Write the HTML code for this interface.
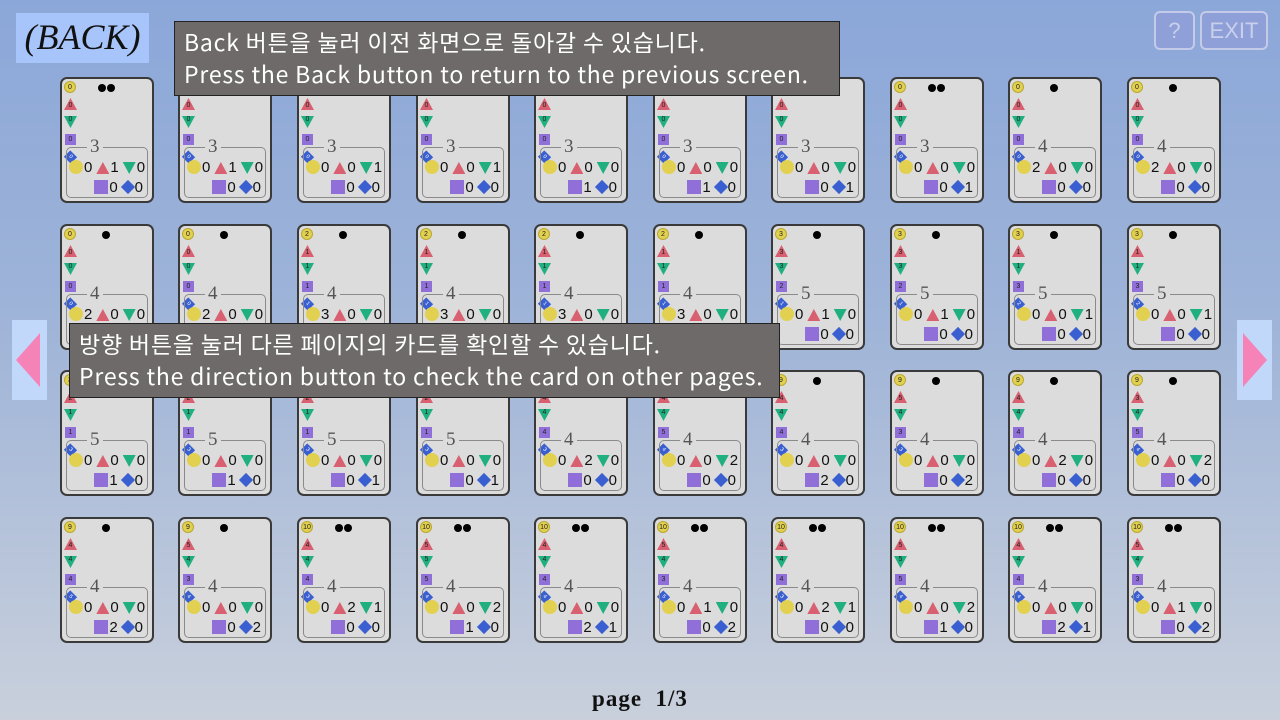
<!DOCTYPE html><html><head><meta charset="utf-8"><style>
*{margin:0;padding:0;box-sizing:border-box}
body{width:1280px;height:720px;overflow:hidden;position:relative;background:linear-gradient(#8ba7d9 0%,#9fb4d8 45%,#c9d0dc 100%);font-family:"Liberation Sans","Noto Sans CJK KR",sans-serif}
.c{position:absolute;width:94px;height:126px;background:#dcdcdc;border:2px solid #3a3a3a;border-radius:7px}
.c>i{position:absolute;left:2px;font-style:normal;font-size:7px;color:#222;text-align:center;line-height:12px;width:13px;height:12px}
.y{top:2px;background:#e2d050;border-radius:50%;border:1px solid #b8a830;width:12px!important}
.t{top:19px;background:#d86070;clip-path:polygon(50% 0,100% 100%,0 100%);line-height:15px!important}
.v{top:37px;background:#20b080;clip-path:polygon(0 0,100% 0,50% 100%);line-height:8px!important}
.s{top:55px;background:#9070d8;width:11px!important;height:11px!important;left:3px!important;line-height:11px!important}
.q{top:72px;background:#3a5fd0;transform:rotate(45deg) scale(.75);color:#fff!important}
.d1,.d2{position:absolute;top:5px;left:40px;width:8px;height:8px;border-radius:50%;background:#000}
.d2{left:36px;box-shadow:9px 0 0 #000}
.bx{position:absolute;left:4px;top:68px;width:82px;height:51px;border:1.5px solid #8a8a8a;border-radius:5px}
.n{position:absolute;left:20px;top:-11px;background:#dcdcdc;padding:0 3px;font:19px "Liberation Serif",serif;color:#555;line-height:19px}
.bx p{position:absolute;font-size:15px;color:#111;line-height:16px;white-space:nowrap}
.p1{left:2px;top:12px}.p2{right:4px;top:32px}
u{display:inline-block;vertical-align:-2px;margin:0 1px 0 4px;text-decoration:none}
.p1 u:first-child{margin-left:0}
.ci{width:14px;height:14px;border-radius:50%;background:#e2d050}
.tr{width:13px;height:12px;background:#d86070;clip-path:polygon(50% 0,100% 100%,0 100%)}
.iv{width:13px;height:12px;background:#20b080;clip-path:polygon(0 0,100% 0,50% 100%)}
.sq{width:14px;height:14px;background:#9070d8}
.dm{width:10px;height:10px;background:#3a5fd0;transform:rotate(45deg);margin:0 2px 0 5px;vertical-align:0}
.tip{position:absolute;background:#6e6a6a;border:1.5px solid #222;color:#fff;font-family:"Noto Sans CJK KR","Liberation Sans",sans-serif;font-size:23px;letter-spacing:0.8px;line-height:32px;padding:3px 9px;white-space:nowrap;overflow:hidden}
.arr{position:absolute;top:320px;width:35px;height:80px;background:#c2d8fb}
.arr:after{content:"";position:absolute;top:13px;width:24px;height:54px;background:#f583b7}
.al:after{left:4px;clip-path:polygon(100% 0,100% 100%,0 50%)}
.ar:after{left:6px;clip-path:polygon(0 0,0 100%,100% 50%)}
.tb{position:absolute;top:11px;height:39px;border:2px solid #c4cbe8;border-radius:6px;background:#8f9fd8;color:#c8d0ec;font-size:22px;text-align:center;line-height:35px}
</style></head><body>
<div style="position:absolute;left:16px;top:13px;width:133px;height:50px;background:#a8c5fb;font:italic 36px 'Liberation Serif',serif;text-align:center;line-height:48px;color:#111">(BACK)</div>
<div class="tb" style="left:1154px;width:41px">?</div>
<div class="tb" style="left:1200px;width:68px">EXIT</div>

<div class="c" style="left:60px;top:77px"><i class="y">0</i><b class="d2"></b><i class="t">0</i><i class="v">0</i><i class="s">0</i><i class="q">0</i><div class="bx"><span class="n">3</span><p class="p1"><u class="ci"></u>0<u class="tr"></u>1<u class="iv"></u>0</p><p class="p2"><u class="sq"></u>0<u class="dm"></u>0</p></div></div>
<div class="c" style="left:178px;top:77px"><i class="y">0</i><b class="d2"></b><i class="t">0</i><i class="v">0</i><i class="s">0</i><i class="q">0</i><div class="bx"><span class="n">3</span><p class="p1"><u class="ci"></u>0<u class="tr"></u>1<u class="iv"></u>0</p><p class="p2"><u class="sq"></u>0<u class="dm"></u>0</p></div></div>
<div class="c" style="left:297px;top:77px"><i class="y">0</i><b class="d2"></b><i class="t">0</i><i class="v">0</i><i class="s">0</i><i class="q">0</i><div class="bx"><span class="n">3</span><p class="p1"><u class="ci"></u>0<u class="tr"></u>0<u class="iv"></u>1</p><p class="p2"><u class="sq"></u>0<u class="dm"></u>0</p></div></div>
<div class="c" style="left:416px;top:77px"><i class="y">0</i><b class="d2"></b><i class="t">0</i><i class="v">0</i><i class="s">0</i><i class="q">0</i><div class="bx"><span class="n">3</span><p class="p1"><u class="ci"></u>0<u class="tr"></u>0<u class="iv"></u>1</p><p class="p2"><u class="sq"></u>0<u class="dm"></u>0</p></div></div>
<div class="c" style="left:534px;top:77px"><i class="y">0</i><b class="d2"></b><i class="t">0</i><i class="v">0</i><i class="s">0</i><i class="q">0</i><div class="bx"><span class="n">3</span><p class="p1"><u class="ci"></u>0<u class="tr"></u>0<u class="iv"></u>0</p><p class="p2"><u class="sq"></u>1<u class="dm"></u>0</p></div></div>
<div class="c" style="left:653px;top:77px"><i class="y">0</i><b class="d2"></b><i class="t">0</i><i class="v">0</i><i class="s">0</i><i class="q">0</i><div class="bx"><span class="n">3</span><p class="p1"><u class="ci"></u>0<u class="tr"></u>0<u class="iv"></u>0</p><p class="p2"><u class="sq"></u>1<u class="dm"></u>0</p></div></div>
<div class="c" style="left:771px;top:77px"><i class="y">0</i><b class="d2"></b><i class="t">0</i><i class="v">0</i><i class="s">0</i><i class="q">0</i><div class="bx"><span class="n">3</span><p class="p1"><u class="ci"></u>0<u class="tr"></u>0<u class="iv"></u>0</p><p class="p2"><u class="sq"></u>0<u class="dm"></u>1</p></div></div>
<div class="c" style="left:890px;top:77px"><i class="y">0</i><b class="d2"></b><i class="t">0</i><i class="v">0</i><i class="s">0</i><i class="q">0</i><div class="bx"><span class="n">3</span><p class="p1"><u class="ci"></u>0<u class="tr"></u>0<u class="iv"></u>0</p><p class="p2"><u class="sq"></u>0<u class="dm"></u>1</p></div></div>
<div class="c" style="left:1008px;top:77px"><i class="y">0</i><b class="d1"></b><i class="t">0</i><i class="v">0</i><i class="s">0</i><i class="q">0</i><div class="bx"><span class="n">4</span><p class="p1"><u class="ci"></u>2<u class="tr"></u>0<u class="iv"></u>0</p><p class="p2"><u class="sq"></u>0<u class="dm"></u>0</p></div></div>
<div class="c" style="left:1127px;top:77px"><i class="y">0</i><b class="d1"></b><i class="t">0</i><i class="v">0</i><i class="s">0</i><i class="q">0</i><div class="bx"><span class="n">4</span><p class="p1"><u class="ci"></u>2<u class="tr"></u>0<u class="iv"></u>0</p><p class="p2"><u class="sq"></u>0<u class="dm"></u>0</p></div></div>

<div class="c" style="left:60px;top:224px"><i class="y">0</i><b class="d1"></b><i class="t">0</i><i class="v">0</i><i class="s">0</i><i class="q">0</i><div class="bx"><span class="n">4</span><p class="p1"><u class="ci"></u>2<u class="tr"></u>0<u class="iv"></u>0</p><p class="p2"><u class="sq"></u>0<u class="dm"></u>0</p></div></div>
<div class="c" style="left:178px;top:224px"><i class="y">0</i><b class="d1"></b><i class="t">0</i><i class="v">0</i><i class="s">0</i><i class="q">0</i><div class="bx"><span class="n">4</span><p class="p1"><u class="ci"></u>2<u class="tr"></u>0<u class="iv"></u>0</p><p class="p2"><u class="sq"></u>0<u class="dm"></u>0</p></div></div>
<div class="c" style="left:297px;top:224px"><i class="y">2</i><b class="d1"></b><i class="t">1</i><i class="v">1</i><i class="s">1</i><i class="q">1</i><div class="bx"><span class="n">4</span><p class="p1"><u class="ci"></u>3<u class="tr"></u>0<u class="iv"></u>0</p><p class="p2"><u class="sq"></u>0<u class="dm"></u>0</p></div></div>
<div class="c" style="left:416px;top:224px"><i class="y">2</i><b class="d1"></b><i class="t">1</i><i class="v">1</i><i class="s">1</i><i class="q">1</i><div class="bx"><span class="n">4</span><p class="p1"><u class="ci"></u>3<u class="tr"></u>0<u class="iv"></u>0</p><p class="p2"><u class="sq"></u>0<u class="dm"></u>0</p></div></div>
<div class="c" style="left:534px;top:224px"><i class="y">2</i><b class="d1"></b><i class="t">1</i><i class="v">1</i><i class="s">1</i><i class="q">1</i><div class="bx"><span class="n">4</span><p class="p1"><u class="ci"></u>3<u class="tr"></u>0<u class="iv"></u>0</p><p class="p2"><u class="sq"></u>0<u class="dm"></u>0</p></div></div>
<div class="c" style="left:653px;top:224px"><i class="y">2</i><b class="d1"></b><i class="t">1</i><i class="v">1</i><i class="s">1</i><i class="q">1</i><div class="bx"><span class="n">4</span><p class="p1"><u class="ci"></u>3<u class="tr"></u>0<u class="iv"></u>0</p><p class="p2"><u class="sq"></u>0<u class="dm"></u>0</p></div></div>
<div class="c" style="left:771px;top:224px"><i class="y">3</i><b class="d1"></b><i class="t">3</i><i class="v">3</i><i class="s">2</i><i class="q">1</i><div class="bx"><span class="n">5</span><p class="p1"><u class="ci"></u>0<u class="tr"></u>1<u class="iv"></u>0</p><p class="p2"><u class="sq"></u>0<u class="dm"></u>0</p></div></div>
<div class="c" style="left:890px;top:224px"><i class="y">3</i><b class="d1"></b><i class="t">3</i><i class="v">3</i><i class="s">2</i><i class="q">1</i><div class="bx"><span class="n">5</span><p class="p1"><u class="ci"></u>0<u class="tr"></u>1<u class="iv"></u>0</p><p class="p2"><u class="sq"></u>0<u class="dm"></u>0</p></div></div>
<div class="c" style="left:1008px;top:224px"><i class="y">3</i><b class="d1"></b><i class="t">1</i><i class="v">1</i><i class="s">3</i><i class="q">2</i><div class="bx"><span class="n">5</span><p class="p1"><u class="ci"></u>0<u class="tr"></u>0<u class="iv"></u>1</p><p class="p2"><u class="sq"></u>0<u class="dm"></u>0</p></div></div>
<div class="c" style="left:1127px;top:224px"><i class="y">3</i><b class="d1"></b><i class="t">1</i><i class="v">1</i><i class="s">3</i><i class="q">2</i><div class="bx"><span class="n">5</span><p class="p1"><u class="ci"></u>0<u class="tr"></u>0<u class="iv"></u>1</p><p class="p2"><u class="sq"></u>0<u class="dm"></u>0</p></div></div>

<div class="c" style="left:60px;top:370px"><i class="y">3</i><b class="d1"></b><i class="t">2</i><i class="v">1</i><i class="s">1</i><i class="q">3</i><div class="bx"><span class="n">5</span><p class="p1"><u class="ci"></u>0<u class="tr"></u>0<u class="iv"></u>0</p><p class="p2"><u class="sq"></u>1<u class="dm"></u>0</p></div></div>
<div class="c" style="left:178px;top:370px"><i class="y">3</i><b class="d1"></b><i class="t">2</i><i class="v">1</i><i class="s">1</i><i class="q">3</i><div class="bx"><span class="n">5</span><p class="p1"><u class="ci"></u>0<u class="tr"></u>0<u class="iv"></u>0</p><p class="p2"><u class="sq"></u>1<u class="dm"></u>0</p></div></div>
<div class="c" style="left:297px;top:370px"><i class="y">3</i><b class="d1"></b><i class="t">2</i><i class="v">1</i><i class="s">1</i><i class="q">3</i><div class="bx"><span class="n">5</span><p class="p1"><u class="ci"></u>0<u class="tr"></u>0<u class="iv"></u>0</p><p class="p2"><u class="sq"></u>0<u class="dm"></u>1</p></div></div>
<div class="c" style="left:416px;top:370px"><i class="y">3</i><b class="d1"></b><i class="t">2</i><i class="v">1</i><i class="s">1</i><i class="q">3</i><div class="bx"><span class="n">5</span><p class="p1"><u class="ci"></u>0<u class="tr"></u>0<u class="iv"></u>0</p><p class="p2"><u class="sq"></u>0<u class="dm"></u>1</p></div></div>
<div class="c" style="left:534px;top:370px"><i class="y">9</i><b class="d1"></b><i class="t">4</i><i class="v">4</i><i class="s">4</i><i class="q">3</i><div class="bx"><span class="n">4</span><p class="p1"><u class="ci"></u>0<u class="tr"></u>2<u class="iv"></u>0</p><p class="p2"><u class="sq"></u>0<u class="dm"></u>0</p></div></div>
<div class="c" style="left:653px;top:370px"><i class="y">9</i><b class="d1"></b><i class="t">4</i><i class="v">4</i><i class="s">5</i><i class="q">4</i><div class="bx"><span class="n">4</span><p class="p1"><u class="ci"></u>0<u class="tr"></u>0<u class="iv"></u>2</p><p class="p2"><u class="sq"></u>0<u class="dm"></u>0</p></div></div>
<div class="c" style="left:771px;top:370px"><i class="y">9</i><b class="d1"></b><i class="t">4</i><i class="v">4</i><i class="s">4</i><i class="q">3</i><div class="bx"><span class="n">4</span><p class="p1"><u class="ci"></u>0<u class="tr"></u>0<u class="iv"></u>0</p><p class="p2"><u class="sq"></u>2<u class="dm"></u>0</p></div></div>
<div class="c" style="left:890px;top:370px"><i class="y">9</i><b class="d1"></b><i class="t">5</i><i class="v">4</i><i class="s">3</i><i class="q">3</i><div class="bx"><span class="n">4</span><p class="p1"><u class="ci"></u>0<u class="tr"></u>0<u class="iv"></u>0</p><p class="p2"><u class="sq"></u>0<u class="dm"></u>2</p></div></div>
<div class="c" style="left:1008px;top:370px"><i class="y">9</i><b class="d1"></b><i class="t">4</i><i class="v">4</i><i class="s">4</i><i class="q">3</i><div class="bx"><span class="n">4</span><p class="p1"><u class="ci"></u>0<u class="tr"></u>2<u class="iv"></u>0</p><p class="p2"><u class="sq"></u>0<u class="dm"></u>0</p></div></div>
<div class="c" style="left:1127px;top:370px"><i class="y">9</i><b class="d1"></b><i class="t">3</i><i class="v">4</i><i class="s">5</i><i class="q">4</i><div class="bx"><span class="n">4</span><p class="p1"><u class="ci"></u>0<u class="tr"></u>0<u class="iv"></u>2</p><p class="p2"><u class="sq"></u>0<u class="dm"></u>0</p></div></div>

<div class="c" style="left:60px;top:517px"><i class="y">9</i><b class="d1"></b><i class="t">4</i><i class="v">4</i><i class="s">4</i><i class="q">5</i><div class="bx"><span class="n">4</span><p class="p1"><u class="ci"></u>0<u class="tr"></u>0<u class="iv"></u>0</p><p class="p2"><u class="sq"></u>2<u class="dm"></u>0</p></div></div>
<div class="c" style="left:178px;top:517px"><i class="y">9</i><b class="d1"></b><i class="t">5</i><i class="v">4</i><i class="s">3</i><i class="q">4</i><div class="bx"><span class="n">4</span><p class="p1"><u class="ci"></u>0<u class="tr"></u>0<u class="iv"></u>0</p><p class="p2"><u class="sq"></u>0<u class="dm"></u>2</p></div></div>
<div class="c" style="left:297px;top:517px"><i class="y">10</i><b class="d2"></b><i class="t">4</i><i class="v">4</i><i class="s">4</i><i class="q">3</i><div class="bx"><span class="n">4</span><p class="p1"><u class="ci"></u>0<u class="tr"></u>2<u class="iv"></u>1</p><p class="p2"><u class="sq"></u>0<u class="dm"></u>0</p></div></div>
<div class="c" style="left:416px;top:517px"><i class="y">10</i><b class="d2"></b><i class="t">5</i><i class="v">5</i><i class="s">5</i><i class="q">4</i><div class="bx"><span class="n">4</span><p class="p1"><u class="ci"></u>0<u class="tr"></u>0<u class="iv"></u>2</p><p class="p2"><u class="sq"></u>1<u class="dm"></u>0</p></div></div>
<div class="c" style="left:534px;top:517px"><i class="y">10</i><b class="d2"></b><i class="t">4</i><i class="v">4</i><i class="s">4</i><i class="q">4</i><div class="bx"><span class="n">4</span><p class="p1"><u class="ci"></u>0<u class="tr"></u>0<u class="iv"></u>0</p><p class="p2"><u class="sq"></u>2<u class="dm"></u>1</p></div></div>
<div class="c" style="left:653px;top:517px"><i class="y">10</i><b class="d2"></b><i class="t">5</i><i class="v">4</i><i class="s">3</i><i class="q">5</i><div class="bx"><span class="n">4</span><p class="p1"><u class="ci"></u>0<u class="tr"></u>1<u class="iv"></u>0</p><p class="p2"><u class="sq"></u>0<u class="dm"></u>2</p></div></div>
<div class="c" style="left:771px;top:517px"><i class="y">10</i><b class="d2"></b><i class="t">4</i><i class="v">4</i><i class="s">4</i><i class="q">3</i><div class="bx"><span class="n">4</span><p class="p1"><u class="ci"></u>0<u class="tr"></u>2<u class="iv"></u>1</p><p class="p2"><u class="sq"></u>0<u class="dm"></u>0</p></div></div>
<div class="c" style="left:890px;top:517px"><i class="y">10</i><b class="d2"></b><i class="t">5</i><i class="v">5</i><i class="s">5</i><i class="q">4</i><div class="bx"><span class="n">4</span><p class="p1"><u class="ci"></u>0<u class="tr"></u>0<u class="iv"></u>2</p><p class="p2"><u class="sq"></u>1<u class="dm"></u>0</p></div></div>
<div class="c" style="left:1008px;top:517px"><i class="y">10</i><b class="d2"></b><i class="t">4</i><i class="v">4</i><i class="s">4</i><i class="q">4</i><div class="bx"><span class="n">4</span><p class="p1"><u class="ci"></u>0<u class="tr"></u>0<u class="iv"></u>0</p><p class="p2"><u class="sq"></u>2<u class="dm"></u>1</p></div></div>
<div class="c" style="left:1127px;top:517px"><i class="y">10</i><b class="d2"></b><i class="t">5</i><i class="v">4</i><i class="s">3</i><i class="q">5</i><div class="bx"><span class="n">4</span><p class="p1"><u class="ci"></u>0<u class="tr"></u>1<u class="iv"></u>0</p><p class="p2"><u class="sq"></u>0<u class="dm"></u>2</p></div></div>

<div class="arr al" style="left:12px"></div>
<div class="arr ar" style="left:1237px"></div>

<div class="tip" style="left:174px;top:21px;width:666px;height:75px">Back 버튼을 눌러 이전 화면으로 돌아갈 수 있습니다.<br>Press the Back button to return to the previous screen.</div>
<div class="tip" style="left:69px;top:323px;width:711px;height:75px">방향 버튼을 눌러 다른 페이지의 카드를 확인할 수 있습니다.<br>Press the direction button to check the card on other pages.</div>

<div style="position:absolute;left:0;width:1280px;top:686px;text-align:center;font:bold 23px 'Liberation Serif',serif;color:#111;letter-spacing:1px">page&nbsp; 1/3</div>
</body></html>
